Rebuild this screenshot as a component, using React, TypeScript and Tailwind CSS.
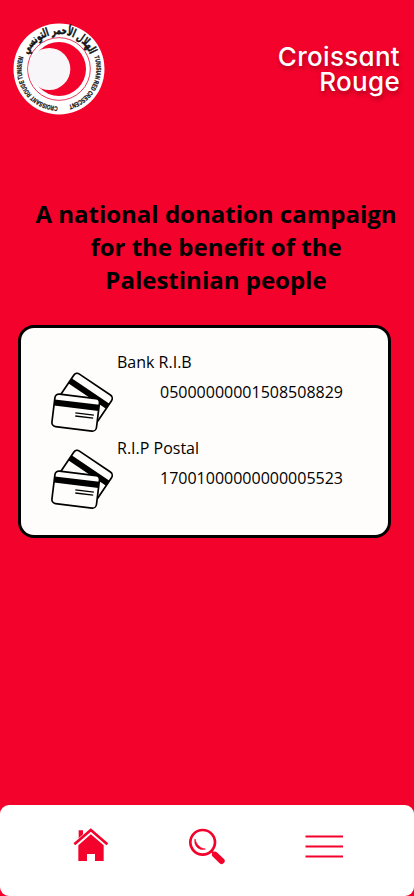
import React from 'react';

function Seal() {
  return (
    <svg className="h-[92px] w-[92px]" viewBox="0 0 276 276">
      <defs>
        <path id="arabicArc" d="M 40 107 A 102 102 0 0 1 236 107" />
        <path id="leftArc" d="M 134 250 A 112 112 0 0 1 33 98" />
        <path id="rightArc" d="M 244 101 A 112 112 0 0 1 158 248" />
      </defs>
      <circle cx="138" cy="138" r="136.500" fill="#fff" />
      <circle cx="138" cy="138" r="94" fill="none" stroke="#e8103a" strokeWidth="2.500" />
      <circle cx="138" cy="138" r="81" fill="#f3022b" />
      <circle cx="109" cy="138" r="63" fill="#f8f6f8" />
      <g fill="#111" stroke="#111" fontWeight="700">
        <text direction="rtl" fontFamily="'DejaVu Sans', sans-serif" fontSize="35" strokeWidth="1.500" textAnchor="middle">
          <textPath href="#arabicArc" startOffset="50%" textLength="236" lengthAdjust="spacingAndGlyphs">الهلال الأحمر التونسي</textPath>
        </text>
        <g fontFamily="'Liberation Sans', Arial, sans-serif" fontSize="20" strokeWidth="0.800">
          <text>
            <textPath href="#leftArc" textLength="208" lengthAdjust="spacingAndGlyphs">CROISSANT ROUGE TUNISIEN</textPath>
          </text>
          <text>
            <textPath href="#rightArc" textLength="184" lengthAdjust="spacingAndGlyphs">TUNISIAN RED CRESCENT</textPath>
          </text>
        </g>
      </g>
    </svg>
  );
}

function BankCards() {
  return (
    <svg className="h-[75px] w-[85px] shrink-0" viewBox="2 -1 250 220.6">
      <g transform="translate(108 19) rotate(34)">
        <rect width="134" height="96" rx="12" fill="#fffdfb" stroke="#000" strokeWidth="5" />
        <rect y="23" width="134" height="18" />
      </g>
      <g transform="translate(107 139) rotate(7)">
        <rect x="-66" y="-48" width="132" height="96" rx="12" fill="#fffdfb" stroke="#000" strokeWidth="5" />
        <rect x="-66" y="-31" width="132" height="18" />
        <path d="M-1 1H54M0 10H53" stroke="#000" strokeWidth="4" />
      </g>
    </svg>
  );
}

function Account({ label, number, iconOffset }: { label: string; number: string; iconOffset: string }) {
  return (
    <div className="flex h-[86px]">
      <div className={iconOffset}>
        <BankCards />
      </div>
      <div className="-ml-2 text-[16px] leading-[30px] text-black">
        <p>{label}</p>
        <p className="pl-[43px]">{number}</p>
      </div>
    </div>
  );
}

function HomeIcon() {
  return (
    <svg className="mb-[2px] h-[35px] w-9" viewBox="39 39 108 105" fill="#f3022b">
      <path d="M56 46H69V58L56 70Z" />
      <path d="M43 88L92.500 45L142 88" fill="none" stroke="#f3022b" strokeWidth="8" />
      <path d="M55 91L92.500 58L131 91V138H105V117H81V138H55Z" />
    </svg>
  );
}

function SearchIcon() {
  return (
    <svg className="h-[38px] w-[38px]" viewBox="24 36 114 114">
      <circle cx="68" cy="82" r="37" fill="none" stroke="#f3022b" strokeWidth="8" />
      <path d="M45 72C41 91 55 108 76 102C62 101 49 90 45 72Z" fill="#f3022b" stroke="#f3022b" strokeWidth="2" />
      <path d="M94 108L104 118" stroke="#f3022b" strokeWidth="7" />
      <path d="M105 119L125 138" stroke="#f3022b" strokeWidth="18" strokeLinecap="round" />
    </svg>
  );
}

function MenuIcon() {
  return (
    <svg className="h-[22px] w-[38px] overflow-visible" viewBox="0 0 38 22" stroke="#f3022b" strokeWidth="1.900">
      <path d="M0.500 1.500H38M0.500 11.500H38M0.500 21.500H38" />
    </svg>
  );
}

export default function App() {
  return (
    <div className="flex h-[896px] w-[414px] flex-col overflow-hidden bg-[#f3022b] font-['Open_Sans',sans-serif]">
      <header className="flex h-[197px] shrink-0 items-start justify-between pl-[13px] pr-[14px] pt-[23px]">
        <Seal />
        <h1 className="mt-[21px] text-right font-['Inter',sans-serif] text-[26px] font-medium leading-[25px] tracking-[0.3px] text-white [font-feature-settings:'cv11'] [text-shadow:1px_3px_4px_rgba(0,0,0,0.3)]">
          Croissant
          <br />
          Rouge
        </h1>
      </header>
      <h2 className="ml-[18px] w-[396px] text-center text-[24px] font-bold leading-[33px] text-black">
        A national donation campaign
        <br />
        for the benefit of the
        <br />
        Palestinian people
      </h2>
      <section className="ml-[18px] mt-[29px] flex h-[213px] w-[373px] flex-col rounded-[16px] border-[3px] border-black bg-[#fffdfb] pl-[19px] pt-[19px]">
        <Account label="Bank R.I.B" number="05000000001508508829" iconOffset="pt-[18px]" />
        <Account label="R.I.P Postal" number="17001000000000005523" iconOffset="pt-[9px]" />
      </section>
      <nav className="mt-auto flex h-[91px] items-center gap-[79px] rounded-[9px] bg-white pb-[9px] pl-[73px]">
        <HomeIcon />
        <SearchIcon />
        <MenuIcon />
      </nav>
    </div>
  );
}
